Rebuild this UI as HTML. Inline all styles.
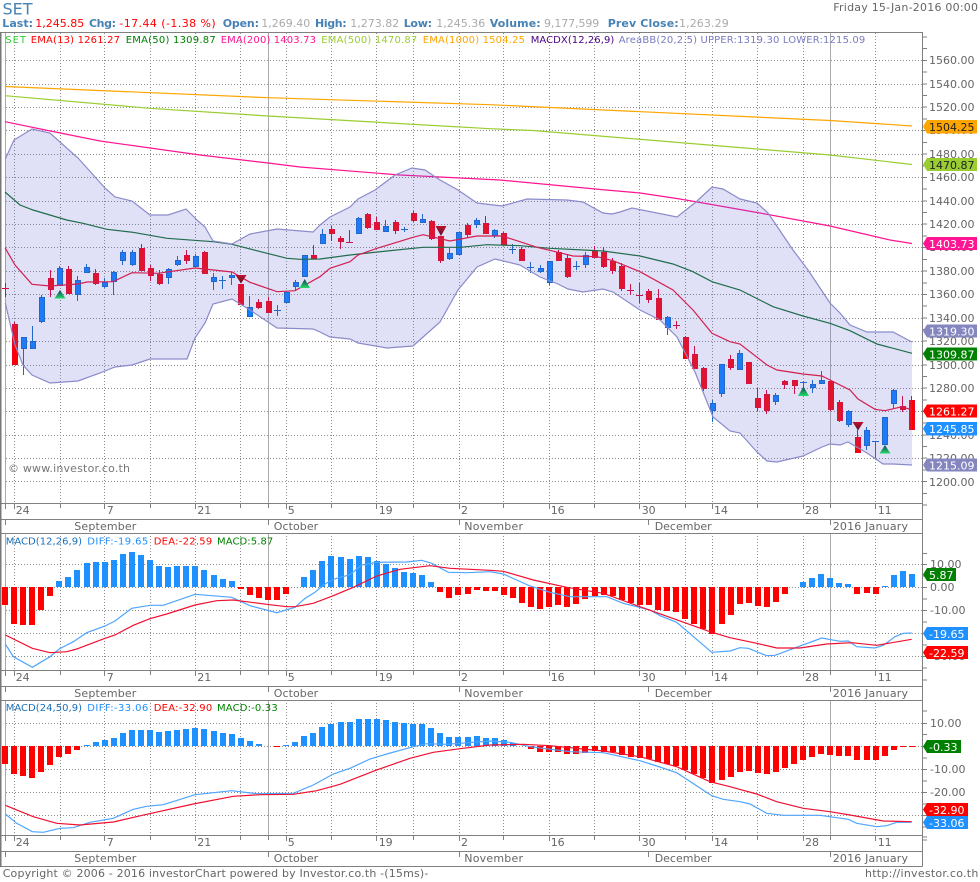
<!DOCTYPE html>
<html lang="en"><head><meta charset="utf-8"><title>SET Chart</title>
<style>
html,body{margin:0;padding:0;background:#fff;overflow:hidden}
svg{display:block}
text{font-family:"DejaVu Sans","Liberation Sans",sans-serif;font-size:11px;fill:#666}
.b{font-weight:bold;fill:#4682b4}
.v{fill:#aaa}
.s{font-size:10px}
.f{fill:#fff}
.k{fill:#222}
</style></head><body>
<svg xmlns="http://www.w3.org/2000/svg" width="980" height="882" viewBox="0 0 980 882">
<defs>
<linearGradient id="up" x1="0" y1="0" x2="0" y2="1"><stop offset="0" stop-color="#143c5a"/><stop offset="1" stop-color="#22dd66"/></linearGradient>
<linearGradient id="dn" x1="0" y1="0" x2="0" y2="1"><stop offset="0" stop-color="#c01030"/><stop offset="1" stop-color="#5a1020"/></linearGradient>
</defs>
<rect width="980" height="882" fill="#fff"/>

<!-- horizontal grid -->
<path fill="none" stroke="#8c8c8c" stroke-dasharray="1 2" d="M6 60.5H922M6 84.5H922M6 107.5H922M6 130.5H922M6 154.5H922M6 177.5H922M6 201.5H922M6 224.5H922M6 247.5H922M6 271.5H922M6 294.5H922M6 318.5H922M6 341.5H922M6 365.5H922M6 388.5H922M6 411.5H922M6 435.5H922M6 458.5H922M6 481.5H922
M6 564.5H922M6 587.5H922M6 610.5H922M6 633.5H922M6 656.5H922
M6 723.5H922M6 746.5H922M6 769.5H922M6 792.5H922M6 815.5H922"/>
<!-- vertical grid -->
<path fill="none" stroke="#8c8c8c" stroke-dasharray="1 2" d="M14.5 33V503M60.5 33V503M104.5 33V503M150.5 33V503M195.5 33V503M240.5 33V503M286.5 33V503M331.5 33V503M376.5 33V503M413.5 33V503M459.5 33V503M503.5 33V503M549.5 33V503M594.5 33V503M639.5 33V503M685.5 33V503M712.5 33V503M757.5 33V503M803.5 33V503M875.5 33V503
M14.5 533V670M60.5 533V670M104.5 533V670M150.5 533V670M195.5 533V670M240.5 533V670M286.5 533V670M331.5 533V670M376.5 533V670M413.5 533V670M459.5 533V670M503.5 533V670M549.5 533V670M594.5 533V670M639.5 533V670M685.5 533V670M712.5 533V670M757.5 533V670M803.5 533V670M875.5 533V670
M14.5 700V835M60.5 700V835M104.5 700V835M150.5 700V835M195.5 700V835M240.5 700V835M286.5 700V835M331.5 700V835M376.5 700V835M413.5 700V835M459.5 700V835M503.5 700V835M549.5 700V835M594.5 700V835M639.5 700V835M685.5 700V835M712.5 700V835M757.5 700V835M803.5 700V835M875.5 700V835"/>
<path fill="none" stroke="#aaa" d="M5.5 33V503M268.5 33V503M830.5 33V503M5.5 533V670M268.5 533V670M830.5 533V670M5.5 700V835M268.5 700V835M830.5 700V835"/>

<!-- wicks -->
<path fill="none" stroke="#e00030" d="M5.5 283V297M2 288.5H9M14.5 322V364M50.5 270V297M68.5 266V293M95.5 269V285M141.5 244V270M150.5 265V281M159.5 270V285M186.5 250V264M204.5 251V274M258.5 299V309M268.5 297V312M313.5 245V259M331.5 226V241M340.5 236V249M349.5 230V243M346 242.5H353M367.5 213V229M376.5 217V229M395.5 220V234M413.5 211V222M431.5 220V240M440.5 236V263M467.5 223V238M485.5 216V234M503.5 232V244M521.5 247V260M558.5 250V260M567.5 254V278M594.5 246V257M603.5 247V268M612.5 258V274M621.5 263V291M630.5 284V295M627 290.5H634M639.5 283V303M636 295.5H643M648.5 289V303M658.5 289V319M676.5 321V329M673 325.5H680M685.5 336V358M694.5 346V368M703.5 367V391M730.5 355V370M748.5 362V384M757.5 388V411M766.5 390V414M784.5 380V389M794.5 380V394M830.5 381V411M839.5 400V422M857.5 430V452M902.5 396V412M911.5 396V429"/>
<path fill="none" stroke="#1468c8" d="M23.5 337V375M32.5 326V341M41.5 295V323M59.5 266V268M77.5 276V301M86.5 264V273M104.5 278V288M113.5 271V295M122.5 250V265M132.5 250V266M168.5 268V284M177.5 256V266M195.5 254V267M213.5 273V290M222.5 276V289M219 280.5H226M231.5 272V285M249.5 296V317M277.5 305V316M274 310.5H281M295.5 280V291M322.5 229V244M358.5 217V234M385.5 220V231M404.5 227V232M401 229.5H408M422.5 214V223M449.5 248V260M476.5 218V228M494.5 229V238M512.5 244V254M509 249.5H516M530.5 262V273M527 267.5H534M540.5 265V273M549.5 261V285M576.5 261V270M573 266.5H580M585.5 252V268M667.5 316V335M712.5 400V422M721.5 364V397M739.5 350V369M775.5 393V405M803.5 381V395M800 382.5H807M812.5 380V393M821.5 371V383M848.5 410V427M866.5 427V450M875.5 441V458M872 441.5H879M893.5 389V408"/>
<!-- bodies -->
<path fill="#ff0000" stroke="#f00020" stroke-width="1" d="M12.5 324.5h5v40h-5zM48.5 278.5h5v11h-5zM66.5 269.5h5v24h-5zM93.5 273.5h5v10h-5zM139.5 248.5h5v22h-5zM148.5 268.5h5v7h-5zM157.5 274.5h5v9h-5zM184.5 255.5h5v5h-5zM202.5 252.5h5v21h-5zM238.5 284.5h5v20h-5zM256.5 302.5h5v5h-5zM266.5 301.5h5v11h-5zM311.5 255.5h5v3h-5zM329.5 229.5h5v4h-5zM338.5 238.5h5v3h-5zM365.5 214.5h5v13h-5zM374.5 222.5h5v7h-5zM393.5 222.5h5v8h-5zM411.5 213.5h5v7h-5zM429.5 221.5h5v17h-5zM438.5 236.5h5v24h-5zM465.5 225.5h5v9h-5zM483.5 223.5h5v10h-5zM501.5 233.5h5v11h-5zM519.5 249.5h5v11h-5zM556.5 252.5h5v8h-5zM565.5 258.5h5v18h-5zM592.5 251.5h5v6h-5zM601.5 252.5h5v14h-5zM610.5 261.5h5v9h-5zM619.5 266.5h5v22h-5zM646.5 291.5h5v8h-5zM656.5 298.5h5v21h-5zM683.5 337.5h5v21h-5zM692.5 354.5h5v14h-5zM701.5 368.5h5v20h-5zM728.5 359.5h5v8h-5zM746.5 362.5h5v21h-5zM755.5 398.5h5v9h-5zM764.5 394.5h5v16h-5zM782.5 381.5h5v3h-5zM792.5 380.5h5v5h-5zM828.5 381.5h5v28h-5zM837.5 402.5h5v18h-5zM855.5 437.5h5v15h-5zM900.5 406.5h5v3h-5zM909.5 400.5h5v29h-5z"/>
<path fill="#0e80ff" stroke="#1468c8" stroke-width="1" d="M21.5 337.5h5v11h-5zM30.5 341.5h5v7h-5zM39.5 297.5h5v24h-5zM57.5 268.5h5v17h-5zM75.5 280.5h5v14h-5zM84.5 267.5h5v5h-5zM102.5 282.5h5v4h-5zM111.5 272.5h5v9h-5zM120.5 252.5h5v8h-5zM130.5 252.5h5v12h-5zM166.5 269.5h5v8h-5zM175.5 260.5h5v4h-5zM193.5 256.5h5v10h-5zM211.5 277.5h5v4h-5zM229.5 275.5h5v2h-5zM247.5 307.5h5v9h-5zM284.5 292.5h5v10h-5zM293.5 282.5h5v4h-5zM302.5 255.5h5v21h-5zM320.5 234.5h5v9h-5zM356.5 218.5h5v15h-5zM383.5 226.5h5v5h-5zM420.5 219.5h5v3h-5zM447.5 253.5h5v5h-5zM456.5 232.5h5v22h-5zM474.5 220.5h5v4h-5zM492.5 230.5h5v5h-5zM538.5 268.5h5v3h-5zM547.5 261.5h5v21h-5zM583.5 255.5h5v9h-5zM665.5 317.5h5v10h-5zM710.5 403.5h5v7h-5zM719.5 364.5h5v29h-5zM737.5 353.5h5v16h-5zM773.5 395.5h5v6h-5zM810.5 384.5h5v3h-5zM819.5 380.5h5v3h-5zM846.5 411.5h5v13h-5zM864.5 430.5h5v15h-5zM882.5 417.5h5v27h-5zM891.5 390.5h5v13h-5z"/>

<!-- main lines -->
<g fill="none" stroke-width="1.2">
<polyline stroke="#ffa500" points="5,86.5 268,97.7 490,104.7 830,120.5 912,126"/>
<polyline stroke="#9acd32" points="5,95.7 150,108.3 268,116 490,128.7 533,130.5 830,155 912,164.5"/>
<polyline stroke="#ff1493" points="5,121.7 43,129.5 100,141 200,155 268,163 300,167 400,175 500,180 606,190 640,193 680,199 760,213 830,226 890,240 912,243.5"/>
<polyline stroke="#107028" points="5,192 20,205 33,210 66.7,220 83,223.3 107,229.3 133,232.3 167,238.3 213,241.7 232,244.3 267,253.3 287,258.3 300,259.3 320,259 350,255 387,251 423,247.3 460,247.3 487,244.7 520,245.7 550,248.3 603,251 640,256 673,264 693,271.7 712,281.7 740,290 773,306.7 803,316 830,323.3 850,330.7 877,344 912,353.3"/>
<polyline stroke="#ee1030" points="5,247.7 15,265 32,284.3 50,286 78,284 87,282 113,281.7 132,272.7 158,273.3 195,268 232,272 250,282.3 277,291.7 295,290.7 305,285 320,276.7 330,268.3 350,261.7 358,255 377,248.3 413,237.3 423,234.7 450,241 477,236 502,236 520,241.7 537,247.3 558,252.3 573,256 597,256.7 613,260.7 640,271.7 673,290 693,310 712,333.3 730,341.7 740,344 767,365 777,370 803,374 822,376 830,380 850,390 858,399 875,409.3 885,410.7 902,406.7 912,410"/>
</g>

<!-- Bollinger band -->
<path fill="rgba(102,102,215,.2)" d="M5.3 159L14 140 32 129 50 133 60 142 78 158 105 188 115 197 132 201 150 215 168 215 186 209 197 220 205 227 213 241 232 244 250 234 277 229 313 232 320 225 330 217 350 207 358 199 375 190 395 175 412 168 425 170 440 180 458 190 477 203 502 206 527 199 567 200 583 202 603 213 612 214 620 212 632 208 677 217 696 202 712 187 723 189 740 199 757 203 768 213 793 250 808 270 830 303 840 313 850 325 867 332 893 332 912 342L912 465 893 464 883 464 867 453 848 442 840 445 830 444 822 447 803 456 777 462 767 461 757 452 740 433 730 431 713 417 695 372 677 337 660 320 640 310 613 292 603 289 583 292 568 289 558 284 540 277 520 265 495 259 477 267 458 290 440 322 413 346 387 348 358 343 350 339 330 337 320 332 313 329 277 328 250 310 232 299 213 304 205 323 195 338 187 359 150 359 132 365 115 367 100 373 78 381 50 383 32 375 23 365 15 345 5.3 303Z"/>
<g fill="none" stroke="#8b8bcb" stroke-width="1.2">
<polyline points="5.3,159 14,140 32,129 50,133 60,142 78,158 105,188 115,197 132,201 150,215 168,215 186,209 197,220 205,227 213,241 232,244 250,234 277,229 313,232 320,225 330,217 350,207 358,199 375,190 395,175 412,168 425,170 440,180 458,190 477,203 502,206 527,199 567,200 583,202 603,213 612,214 620,212 632,208 677,217 696,202 712,187 723,189 740,199 757,203 768,213 793,250 808,270 830,303 840,313 850,325 867,332 893,332 912,342"/>
<polyline points="912,465 893,464 883,464 867,453 848,442 840,445 830,444 822,447 803,456 777,462 767,461 757,452 740,433 730,431 713,417 695,372 677,337 660,320 640,310 613,292 603,289 583,292 568,289 558,284 540,277 520,265 495,259 477,267 458,290 440,322 413,346 387,348 358,343 350,339 330,337 320,332 313,329 277,328 250,310 232,299 213,304 205,323 195,338 187,359 150,359 132,365 115,367 100,373 78,381 50,383 32,375 23,365 15,345 5.3,303"/>
</g>

<!-- signal arrows -->
<path fill="url(#up)" d="M60 290L65.5 298.5H54.5Z"/>
<path fill="url(#up)" d="M304.7 279L310 288H299.5Z"/>
<path fill="url(#up)" d="M803.5 386.5L809 396H798Z"/>
<path fill="url(#up)" d="M885 445L890.5 453.5H879.5Z"/>
<path fill="url(#dn)" d="M235.5 275H246.5L241 283.5Z"/>
<path fill="url(#dn)" d="M435.5 226H446.5L441 236Z"/>
<path fill="url(#dn)" d="M852.5 422H863.5L858 430.5Z"/>

<!-- MACD 1 -->
<path fill="none" stroke="#ff0000" stroke-width="6" d="M5 587V605M14 587V624M23 587V625M32 587V625M41 587V610M50 587V596M241 587V589M250 587V595M259 587V598M268 587V600M277 587V600M286 587V594M440 587V592M449 587V598M458 587V595M468 587V594M477 587V590M486 587V591M495 587V591M504 587V595M513 587V598M522 587V603M531 587V607M540 587V609M549 587V607M558 587V605M567 587V607M576 587V604M585 587V599M595 587V596M604 587V595M613 587V596M622 587V600M631 587V603M640 587V605M649 587V605M658 587V610M667 587V611M676 587V612M685 587V619M694 587V624M703 587V629M712 587V634M722 587V624M731 587V615M740 587V604M749 587V603M758 587V606M767 587V607M776 587V602M785 587V594M857 587V594M867 587V593M876 587V594"/>
<path fill="none" stroke="#1e90ff" stroke-width="6" d="M59 587V581M68 587V577M77 587V570M87 587V563M96 587V562M105 587V562M114 587V560M123 587V554M132 587V552M141 587V555M150 587V560M159 587V566M168 587V567M177 587V566M186 587V566M195 587V566M204 587V570M214 587V575M223 587V579M232 587V581M304 587V577M313 587V570M322 587V561M331 587V556M341 587V557M350 587V559M359 587V556M368 587V557M377 587V561M386 587V564M395 587V568M404 587V572M413 587V573M422 587V575M431 587V582M803 587V582M812 587V578M821 587V574M830 587V578M839 587V583M848 587V584M885 587V586M894 587V575M903 587V571M912 587V574"/>
<g fill="none" stroke-width="1.2">
<polyline stroke="#4ea5ff" points="5.3,644 13.3,656.7 32.3,667.3 50,656.7 59.3,649 73.3,641.7 86.7,632.7 105,626 115,621 131.7,608.3 150,605.3 163.3,605.3 195,594.3 231.7,597.3 250,605.7 276.7,612.7 295,607.3 305,598.3 315,592.3 323.3,585 333.3,579.3 350,574.7 361.7,565 376.7,562.3 406.7,562 421.7,560.3 431.7,563.3 448.3,572.3 466.7,572.7 490,571.7 503.3,574 530,586 550,592.3 570,596.7 606.7,596.7 623.3,603.3 650,610 660,615.7 676.7,622.3 711.7,652.3 730,651 740,647.7 748.3,648.3 766.7,655.7 775,655.3 821.7,638 840,641.3 848.3,641 856.7,646.7 875,648 883.3,645.3 895,636.7 903.3,633.3 911.7,633"/>
<polyline stroke="#f01030" points="5.3,635 32.3,648.3 50,652.7 66.7,651.7 76.7,649 105,638.3 115,635 133.3,625.3 150,618.7 166.7,614 195,605 216.7,600.7 233.3,600 266.7,604.3 286.7,606.7 295,606.7 313.3,603.3 333.3,595.7 353.3,587.3 376.7,576 400,569.3 430,565.7 450,568.3 490,570.3 503.3,571.3 533.3,580 566.7,587.3 603.3,593.3 640,606.7 710,631.7 730,637.7 756.7,643.3 776.7,648 800,648 826.7,644 851.7,642.7 876.7,645.3 911.7,639.3"/>
</g>

<!-- MACD 2 -->
<path fill="none" stroke="#ff0000" stroke-width="6" d="M5 746V764M14 746V774M23 746V776M32 746V778M41 746V772M50 746V765M59 746V757M68 746V754M77 746V750M277 746V747M531 746V749M540 746V752M549 746V752M558 746V752M567 746V754M576 746V754M585 746V753M595 746V751M604 746V752M613 746V752M622 746V755M631 746V757M640 746V758M649 746V759M658 746V762M667 746V764M676 746V766M685 746V770M694 746V774M703 746V778M712 746V783M722 746V780M731 746V777M740 746V772M749 746V771M758 746V773M767 746V774M776 746V772M785 746V768M794 746V764M803 746V760M812 746V757M821 746V754M830 746V755M839 746V756M848 746V756M857 746V760M867 746V760M876 746V760M885 746V756M894 746V750M903 746V747M912 746V747"/>
<path fill="none" stroke="#1e90ff" stroke-width="6" d="M87 746V745M96 746V742M105 746V740M114 746V738M123 746V733M132 746V730M141 746V730M150 746V730M159 746V732M168 746V731M177 746V730M186 746V729M195 746V728M204 746V729M214 746V731M223 746V733M232 746V734M241 746V738M250 746V741M259 746V744M286 746V745M295 746V742M304 746V736M313 746V733M322 746V727M331 746V724M341 746V722M350 746V722M359 746V719M368 746V719M377 746V719M386 746V720M395 746V722M404 746V723M413 746V724M422 746V724M431 746V728M440 746V733M449 746V737M458 746V737M468 746V737M477 746V736M486 746V738M495 746V738M504 746V740M513 746V743"/>
<g fill="none" stroke-width="1.2">
<polyline stroke="#4ea5ff" points="5.3,814 16.7,823.3 32.3,831.7 43.3,832.3 60,828.3 73.3,827.7 90,822.3 113.3,818.3 133.3,809.3 146.7,806.3 163.3,804.7 195,794.7 231.7,790.7 256.7,793.7 293.3,793.3 313.3,785 333.3,774 350,768.3 370,759 386.7,754 413.3,746.7 426.7,743.7 446.7,744.3 490,741 510,742.3 530,746.7 570,751.7 603.3,752.7 640,760.7 656.7,766 676.7,772.7 711.7,795.7 723.3,799.3 740,801.7 750,804 766.7,813.3 783.3,815.3 820,815.3 848.3,819.3 856.7,823.3 876.7,826.7 886.7,825.7 896.7,822.3 911.7,822.3"/>
<polyline stroke="#f01030" points="5.3,805.3 33.3,816.7 56.7,823.3 80,825 113.3,822 146.7,814.3 193.3,804 233.3,796.3 260,794.7 293.3,794.3 316.7,790.7 340,784.3 376.7,770 410,758.3 433.3,752.3 460,748.7 490,745 523.3,744.3 550,745.7 603.3,751 640,756.7 676.7,766.7 710,781.7 730,786.7 756.7,794 776.7,801.7 803.3,808.3 830,811.7 850,815 883.3,821 911.7,821.7"/>
</g>

<!-- frame -->
<path fill="none" stroke="#808080" d="M0 32.5H922.5M922.5 32V866.5M0 503.5H922M0 519.5H922M0 533.5H922M0 670.5H922M0 686.5H922M0 700.5H922M0 835.5H922M0 851.5H922M0 866.5H922.5"/>
<path fill="none" stroke="#777" stroke-width="1.5" d="M.75 32V867"/>

<!-- strip ticks -->
<path fill="none" stroke="#808080" d="M14.5 503V509M60.5 503V508M104.5 503V509M150.5 503V508M195.5 503V509M240.5 503V508M268.5 503V508M286.5 503V509M331.5 503V508M376.5 503V509M413.5 503V508M459.5 503V509M503.5 503V508M549.5 503V509M594.5 503V508M639.5 503V509M685.5 503V508M712.5 503V509M757.5 503V508M803.5 503V509M830.5 503V508M875.5 503V509
M5.5 503V509M5.5 519V525M268.5 519V525M459.5 519V525M648.5 519V525M830.5 519V525
M14.5 670V676M60.5 670V675M104.5 670V676M150.5 670V675M195.5 670V676M240.5 670V675M268.5 670V675M286.5 670V676M331.5 670V675M376.5 670V676M413.5 670V675M459.5 670V676M503.5 670V675M549.5 670V676M594.5 670V675M639.5 670V676M685.5 670V675M712.5 670V676M757.5 670V675M803.5 670V676M830.5 670V675M875.5 670V676
M5.5 670V676M5.5 686V692M268.5 686V692M459.5 686V692M648.5 686V692M830.5 686V692
M14.5 835V841M60.5 835V840M104.5 835V841M150.5 835V840M195.5 835V841M240.5 835V840M268.5 835V840M286.5 835V841M331.5 835V840M376.5 835V841M413.5 835V840M459.5 835V841M503.5 835V840M549.5 835V841M594.5 835V840M639.5 835V841M685.5 835V840M712.5 835V841M757.5 835V840M803.5 835V841M830.5 835V840M875.5 835V841
M5.5 835V841M5.5 851V857M268.5 851V857M459.5 851V857M648.5 851V857M830.5 851V857"/>
<!-- axis ticks -->
<path fill="none" stroke="#808080" d="M922 37H927M922 48.5H927M922 60.5H927M922 72H927M922 84H927M922 95.5H927M922 107H927M922 119H927M922 130.5H927M922 142.5H927M922 154H927M922 166H927M922 177.5H927M922 189H927M922 201H927M922 212.5H927M922 224H927M922 236H927M922 247.5H927M922 259.5H927M922 271H927M922 283H927M922 294.5H927M922 306H927M922 318H927M922 329.5H927M922 341H927M922 353H927M922 365H927M922 376.5H927M922 388H927M922 400H927M922 411.5H927M922 423H927M922 435H927M922 446.5H927M922 458H927M922 470H927M922 481.5H927M922 493.5H927M922 505H927
M922 553.5H927M922 564.5H927M922 576H927M922 587.5H927M922 599H927M922 610.5H927M922 622H927M922 633.5H927M922 645H927M922 656.5H927M922 668H927M922 680H927
M922 711H927M922 723.5H927M922 734.5H927M922 746.5H927M922 758H927M922 769.5H927M922 781H927M922 792.5H927M922 804H927M922 815.5H927M922 827H927M922 837H927M922 840H927"/>

<!-- axis labels -->
<text x="929" y="64">1560.00</text><text x="929" y="88">1540.00</text><text x="929" y="111">1520.00</text><text x="929" y="134">1500.00</text><text x="929" y="158">1480.00</text><text x="929" y="181">1460.00</text><text x="929" y="205">1440.00</text><text x="929" y="228">1420.00</text><text x="929" y="251">1400.00</text><text x="929" y="275">1380.00</text><text x="929" y="298">1360.00</text><text x="929" y="322">1340.00</text><text x="929" y="345">1320.00</text><text x="929" y="369">1300.00</text><text x="929" y="392">1280.00</text><text x="929" y="415">1260.00</text><text x="929" y="439">1240.00</text><text x="929" y="462">1220.00</text><text x="929" y="486">1200.00</text>
<text x="930" y="568">10.00</text><text x="930" y="591">0.00</text><text x="930" y="614">-10.00</text><text x="930" y="637">-20.00</text><text x="930" y="660">-30.00</text>
<text x="930" y="727">10.00</text><text x="930" y="750">0.00</text><text x="930" y="773">-10.00</text><text x="930" y="796">-20.00</text><text x="930" y="819">-30.00</text>

<!-- price flags -->
<polygon fill="#ffa500" points="923,126.5 927,120 977,120 977,133.5 927,133.5"/><text class="k" x="929" y="131">1504.25</text>
<polygon fill="#9acd32" points="923,164.5 927,158 977,158 977,171 927,171"/><text class="k" x="929" y="169">1470.87</text>
<polygon fill="#ff1493" points="923,243.5 927,237 977,237 977,250 927,250"/><text class="f" x="929" y="248">1403.73</text>
<polygon fill="#8585c0" points="923,331 927,324.5 977,324.5 977,337.5 927,337.5"/><text class="f" x="929" y="335.5">1319.30</text>
<polygon fill="#008000" points="923,354 927,347.5 977,347.5 977,360.5 927,360.5"/><text class="f" x="929" y="358.5">1309.87</text>
<polygon fill="#ff0000" points="923,411 927,404.5 977,404.5 977,417.5 927,417.5"/><text class="f" x="929" y="415.5">1261.27</text>
<polygon fill="#1e90ff" points="923,428.7 927,422 977,422 977,435.5 927,435.5"/><text class="f" x="929" y="433">1245.85</text>
<polygon fill="#8585c0" points="923,465 927,458.5 977,458.5 977,471.5 927,471.5"/><text class="f" x="929" y="469.5">1215.09</text>
<polygon fill="#008000" points="923,574.5 927,568 956,568 956,581 927,581"/><text class="f" x="929" y="579">5.87</text>
<polygon fill="#1e90ff" points="923,633.5 927,627 968,627 968,640 927,640"/><text class="f" x="929" y="638">-19.65</text>
<polygon fill="#ff0000" points="923,652.5 927,646 968,646 968,659 927,659"/><text class="f" x="929" y="657">-22.59</text>
<polygon fill="#008000" points="923,746.5 927,740 961,740 961,753 927,753"/><text class="f" x="929" y="751">-0.33</text>
<polygon fill="#ff0000" points="923,809.5 927,803 968,803 968,816 927,816"/><text class="f" x="929" y="814">-32.90</text>
<polygon fill="#1e90ff" points="923,822.5 927,816 968,816 968,829 927,829"/><text class="f" x="929" y="827">-33.06</text>

<!-- date strips -->
<text x="15.7" y="514">24</text><text x="106.7" y="514">7</text><text x="197.3" y="514">21</text><text x="287.7" y="514">5</text><text x="378.7" y="514">19</text><text x="461" y="514">2</text><text x="550.7" y="514">16</text><text x="641.7" y="514">30</text><text x="714" y="514">14</text><text x="805" y="514">28</text><text x="877.7" y="514">11</text>
<text x="74.3" y="530" textLength="62">September</text><text x="273.7" y="530" textLength="44.5">October</text><text x="464.3" y="530" textLength="58.7">November</text><text x="654.7" y="530" textLength="57">December</text><text x="832.7" y="530" textLength="75.3">2016 January</text>
<text x="15.7" y="681">24</text><text x="106.7" y="681">7</text><text x="197.3" y="681">21</text><text x="287.7" y="681">5</text><text x="378.7" y="681">19</text><text x="461" y="681">2</text><text x="550.7" y="681">16</text><text x="641.7" y="681">30</text><text x="714" y="681">14</text><text x="805" y="681">28</text><text x="877.7" y="681">11</text>
<text x="74.3" y="697" textLength="62">September</text><text x="273.7" y="697" textLength="44.5">October</text><text x="464.3" y="697" textLength="58.7">November</text><text x="654.7" y="697" textLength="57">December</text><text x="832.7" y="697" textLength="75.3">2016 January</text>
<text x="15.7" y="846">24</text><text x="106.7" y="846">7</text><text x="197.3" y="846">21</text><text x="287.7" y="846">5</text><text x="378.7" y="846">19</text><text x="461" y="846">2</text><text x="550.7" y="846">16</text><text x="641.7" y="846">30</text><text x="714" y="846">14</text><text x="805" y="846">28</text><text x="877.7" y="846">11</text>
<text x="74.3" y="862" textLength="62">September</text><text x="273.7" y="862" textLength="44.5">October</text><text x="464.3" y="862" textLength="58.7">November</text><text x="654.7" y="862" textLength="57">December</text><text x="832.7" y="862" textLength="75.3">2016 January</text>

<!-- header -->
<text x="2.5" y="14.5" textLength="30" lengthAdjust="spacingAndGlyphs" style="font-size:16px;fill:#4682b4">SET</text>
<text x="833.3" y="11" textLength="144.7">Friday 15-Jan-2016 00:00</text>
<text class="b" x="2.3" y="27" textLength="30.7">Last:</text><text x="35.3" y="27" textLength="49" style="fill:#f00">1,245.85</text>
<text class="b" x="89" y="27" textLength="27">Chg:</text><text x="119.3" y="27" textLength="96.4" style="fill:#f00">-17.44 (-1.38 %)</text>
<text class="b" x="222.7" y="27" textLength="36.3">Open:</text><text class="v" x="261.3" y="27" textLength="49">1,269.40</text>
<text class="b" x="315" y="27" textLength="31.7">High:</text><text class="v" x="350.3" y="27" textLength="49">1,273.82</text>
<text class="b" x="403.7" y="27" textLength="28.3">Low:</text><text class="v" x="436.3" y="27" textLength="49">1,245.36</text>
<text class="b" x="489.7" y="27" textLength="51">Volume:</text><text class="v" x="544" y="27" textLength="55.3">9,177,599</text>
<text class="b" x="607.7" y="27" textLength="71">Prev Close:</text><text class="v" x="679" y="27" textLength="49.7">1,263.29</text>

<!-- main legend -->
<text class="s" x="5.3" y="43" textLength="20.7" style="fill:#32cd32">SET</text>
<text class="s" x="30.7" y="43" textLength="89.3" style="fill:#f00">EMA(13) 1261.27</text>
<text class="s" x="125.7" y="43" textLength="90" style="fill:#008000">EMA(50) 1309.87</text>
<text class="s" x="220.7" y="43" textLength="95.3" style="fill:#ff1493">EMA(200) 1403.73</text>
<text class="s" x="321.3" y="43" textLength="96" style="fill:#9acd32">EMA(500) 1470.87</text>
<text class="s" x="422.7" y="43" textLength="102.3" style="fill:#ffa500">EMA(1000) 1504.25</text>
<text class="s" x="530.7" y="43" textLength="83.6" style="fill:#4b0082">MACDX(12,26,9)</text>
<text class="s" x="618.7" y="43" textLength="246.6" style="fill:#7b7bc0">AreaBB(20,2.5) UPPER:1319.30 LOWER:1215.09</text>

<text x="8" y="472" textLength="122" style="fill:#777">© www.investor.co.th</text>

<!-- MACD legends -->
<text class="s" x="5.7" y="544.5" textLength="76.3" style="fill:#1a6fb8">MACD(12,26,9)</text>
<text class="s" x="87.3" y="544.5" textLength="61" style="fill:#1e90ff">DIFF:-19.65</text>
<text class="s" x="153.7" y="544.5" textLength="58.6" style="fill:#f00">DEA:-22.59</text>
<text class="s" x="217" y="544.5" textLength="56.3" style="fill:#008000">MACD:5.87</text>
<text class="s" x="5.7" y="711" textLength="76.3" style="fill:#1a6fb8">MACD(24,50,9)</text>
<text class="s" x="87.3" y="711" textLength="61" style="fill:#1e90ff">DIFF:-33.06</text>
<text class="s" x="153.7" y="711" textLength="58.6" style="fill:#f00">DEA:-32.90</text>
<text class="s" x="217" y="711" textLength="60.7" style="fill:#008000">MACD:-0.33</text>

<!-- footer -->
<text x="2.7" y="877" textLength="425.6">Copyright © 2006 - 2016 investorChart powered by Investor.co.th -(15ms)-</text>
<text x="865" y="877" textLength="113.3">http://investor.co.th</text>
</svg>
</body></html>
